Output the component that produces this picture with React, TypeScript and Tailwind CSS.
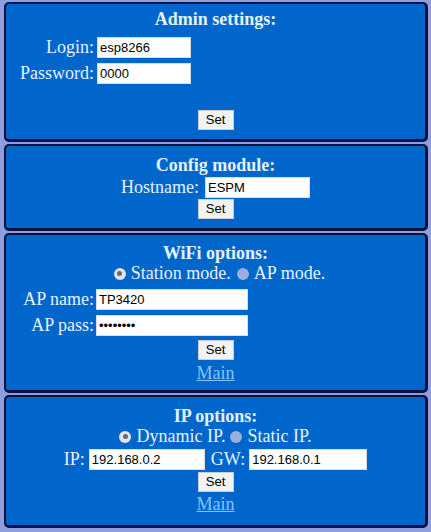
import React from 'react';

const serif = { fontFamily: '"Liberation Serif", "Times New Roman", serif' };
const sans = { fontFamily: '"Liberation Sans", Arial, sans-serif' };

function Panel({ children, className }: { children: React.ReactNode; className: string }) {
  return (
    <div
      className={`bg-[#0066cc] border-2 border-b-[3px] border-r-[3px] border-[#0a1040] rounded-[5px] text-[#e4f2ff] ${className}`}
      style={serif}
    >
      {children}
    </div>
  );
}

function Title({ text }: { text: string }) {
  return <div className="text-center font-bold text-[18px] leading-[22px]">{text}</div>;
}

function Field({ value, w }: { value: string; w: string }) {
  return (
    <input
      readOnly
      value={value}
      className={`h-[21px] ${w} bg-white border border-[#d8dce8] px-[2px] text-[13px] text-black outline-none`}
      style={sans}
    />
  );
}

function SetButton() {
  return (
    <div className="flex justify-center">
      <button
        className="h-[20px] w-[36px] bg-[#f2f2f0] border border-[#c8ccd4] text-[13px] leading-[18px] text-black"
        style={sans}
      >
        Set
      </button>
    </div>
  );
}

function Radio({ checked }: { checked: boolean }) {
  return checked ? (
    <span className="inline-flex items-center justify-center w-[12px] h-[12px] rounded-full bg-[#dfe3ec] mr-[5px]">
      <span className="w-[5px] h-[5px] rounded-full bg-[#6a6a6a]" />
    </span>
  ) : (
    <span className="inline-block w-[12px] h-[12px] rounded-full bg-[#9aaedc] mr-[5px]" />
  );
}

function MainLink() {
  return (
    <div className="text-center text-[18px] leading-[18px]">
      <a className="underline text-[#86c4ff]">Main</a>
    </div>
  );
}

export default function App() {
  return (
    <div className="w-[431px] h-[532px] bg-[#8e9fde] pl-1 pr-[3px] pt-[2px] flex flex-col gap-[2px] text-[18px]">
      {/* Admin */}
      <Panel className="h-[140px] pt-[4px]">
        <Title text="Admin settings:" />
        <div className="mt-[7px] ml-[13px] grid grid-cols-[75px_auto] gap-x-[3px] gap-y-[5px] items-center w-max">
          <span className="text-right leading-[21px]">Login:</span>
          <Field value="esp8266" w="w-[94px]" />
          <span className="text-right leading-[21px]">Password:</span>
          <Field value="0000" w="w-[94px]" />
        </div>
        <div className="mt-[26px]">
          <SetButton />
        </div>
      </Panel>

      {/* Config */}
      <Panel className="h-[87px] pt-[8px]">
        <Title text="Config module:" />
        <div className="flex justify-center items-center gap-[6px]">
          <span className="leading-[22px]">Hostname:</span>
          <Field value="ESPM" w="w-[105px]" />
        </div>
        <div className="mt-[1px]">
          <SetButton />
        </div>
      </Panel>

      {/* WiFi */}
      <Panel className="h-[160px] pt-[7px]">
        <Title text="WiFi options:" />
        <div className="flex justify-center items-center leading-[19px] ml-[8px]">
          <Radio checked />
          <span>Station mode.</span>
          <span className="w-[6px]" />
          <Radio checked={false} />
          <span>AP mode.</span>
        </div>
        <div className="mt-[6px] ml-[15px] grid grid-cols-[73px_auto] gap-x-[2px] gap-y-[5px] items-center w-max">
          <span className="text-right leading-[21px]">AP name:</span>
          <Field value="TP3420" w="w-[152px]" />
          <span className="text-right leading-[21px]">AP pass:</span>
          <Field value="••••••••" w="w-[152px]" />
        </div>
        <div className="mt-[4px]">
          <SetButton />
        </div>
        <div className="mt-[4px]">
          <MainLink />
        </div>
      </Panel>

      {/* IP */}
      <Panel className="h-[133px] pt-[8px]">
        <Title text="IP options:" />
        <div className="flex justify-center items-center leading-[19px]">
          <Radio checked />
          <span>Dynamic IP.</span>
          <span className="w-[5px]" />
          <Radio checked={false} />
          <span>Static IP.</span>
        </div>
        <div className="mt-[3px] flex justify-center items-center">
          <span className="mr-[4px] leading-[21px]">IP:</span>
          <Field value="192.168.0.2" w="w-[116px]" />
          <span className="ml-[6px] mr-[4px] leading-[21px]">GW:</span>
          <Field value="192.168.0.1" w="w-[118px]" />
        </div>
        <div className="mt-[2px]">
          <SetButton />
        </div>
        <div className="mt-[3px]">
          <MainLink />
        </div>
      </Panel>
    </div>
  );
}
